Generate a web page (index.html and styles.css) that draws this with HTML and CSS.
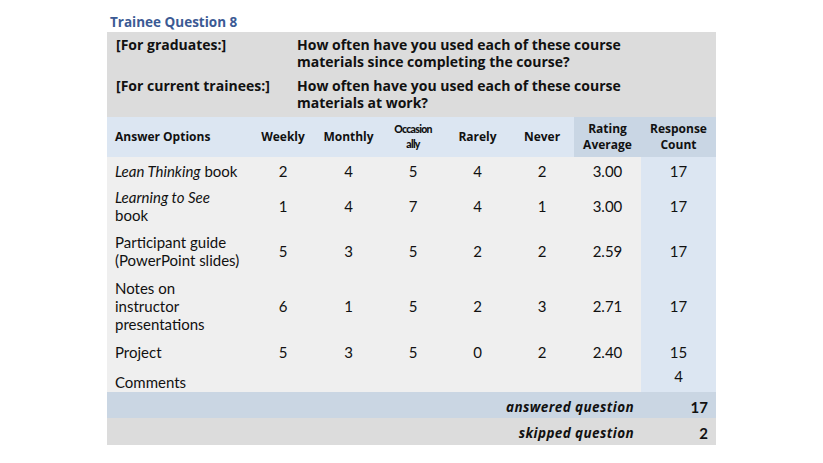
FILE: index.html
```html
<!DOCTYPE html>
<html>
<head>
<meta charset="utf-8">
<link rel="stylesheet" href="styles.css">
</head>
<body>
<div class="wrap">
  <div class="title">Trainee Question 8</div>
  <div class="question">
    <div class="qrow">
      <div class="qlabel">[For graduates:]</div>
      <div class="qtext">How often have you used each of these course materials since completing the course?</div>
    </div>
    <div class="qrow">
      <div class="qlabel">[For current trainees:]</div>
      <div class="qtext">How often have you used each of these course materials at work?</div>
    </div>
  </div>
  <table class="grid">
    <colgroup>
      <col class="c-opt"><col class="c-w"><col class="c-m"><col class="c-o"><col class="c-r"><col class="c-n"><col class="c-avg"><col class="c-cnt">
    </colgroup>
    <thead>
      <tr class="head">
        <th class="opt">Answer Options</th>
        <th>Weekly</th>
        <th>Monthly</th>
        <th class="occ">Occasion<br>ally</th>
        <th>Rarely</th>
        <th>Never</th>
        <th class="dark">Rating<br>Average</th>
        <th class="dark">Response<br>Count</th>
      </tr>
    </thead>
    <tbody>
      <tr class="r1">
        <td class="opt"><i>Lean Thinking</i> book</td>
        <td>2</td><td>4</td><td>5</td><td>4</td><td>2</td><td>3.00</td><td class="cnt">17</td>
      </tr>
      <tr class="r2">
        <td class="opt"><i>Learning to See</i><br>book</td>
        <td>1</td><td>4</td><td>7</td><td>4</td><td>1</td><td>3.00</td><td class="cnt">17</td>
      </tr>
      <tr class="r3">
        <td class="opt">Participant guide<br>(PowerPoint slides)</td>
        <td>5</td><td>3</td><td>5</td><td>2</td><td>2</td><td>2.59</td><td class="cnt">17</td>
      </tr>
      <tr class="r4">
        <td class="opt">Notes on<br>instructor<br>presentations</td>
        <td>6</td><td>1</td><td>5</td><td>2</td><td>3</td><td>2.71</td><td class="cnt">17</td>
      </tr>
      <tr class="r5">
        <td class="opt">Project</td>
        <td>5</td><td>3</td><td>5</td><td>0</td><td>2</td><td>2.40</td><td class="cnt">15</td>
      </tr>
      <tr class="r6">
        <td class="opt comments">Comments</td>
        <td></td><td></td><td></td><td></td><td></td><td></td><td class="cnt four">4</td>
      </tr>
      <tr class="sum answered">
        <td colspan="7" class="lbl">answered question</td>
        <td class="val">17</td>
      </tr>
      <tr class="sum skipped">
        <td colspan="7" class="lbl">skipped question</td>
        <td class="val">2</td>
      </tr>
    </tbody>
  </table>
</div>
</body>
</html>
```
FILE: styles.css
```css
html, body {
  margin: 0;
  padding: 0;
  background: #ffffff;
}
body {
  font-family: "Lato", "Open Sans", sans-serif;
  color: #111111;
}
.wrap {
  width: 609px;
  margin-left: 107px;
  padding-top: 13px;
}
.title {
  font-family: "Open Sans", sans-serif;
  font-size: 13.5px;
  font-weight: 700;
  color: #3b5a94;
  line-height: 19px;
  padding-left: 3px;
}
.question {
  background: #dcdcdc;
  padding: 4px 0 6px 0;
  display: flex;
  flex-direction: column;
  gap: 7px;
}
.qrow {
  display: flex;
  font-family: "Open Sans", sans-serif;
  font-size: 14px;
  font-weight: 700;
  line-height: 17px;
}
.qlabel {
  width: 181px;
  padding-left: 9px;
  flex: none;
}
.qtext {
  width: 350px;
}
.grid {
  width: 609px;
  border-collapse: collapse;
  table-layout: fixed;
  font-size: 15px;
}
.c-opt { width: 143px; }
.c-w { width: 66px; }
.c-m { width: 65px; }
.c-o { width: 64px; }
.c-r { width: 65px; }
.c-n { width: 64px; }
.c-avg { width: 67px; }
.c-cnt { width: 75px; }
.grid th, .grid td {
  padding: 0;
  text-align: center;
  vertical-align: middle;
}
.head {
  height: 40px;
  background: #dce6f2;
}
.head th {
  font-family: "Open Sans", sans-serif;
  font-size: 12px;
  font-weight: 700;
  line-height: 16px;
}
.head th.opt {
  text-align: left;
  padding-left: 8px;
}
.head th.occ {
  font-family: "Lato", sans-serif;
  font-size: 10.5px;
  letter-spacing: -0.7px;
  line-height: 15px;
  font-weight: 900;
}
.head th.dark {
  background: #c9d6e4;
}
.grid tbody td {
  background: #efefef;
  line-height: 18px;
}
.grid tbody td.opt {
  text-align: left;
  padding-left: 8px;
  padding-right: 2px;
}
.grid tbody td.cnt {
  background: #dce6f2;
}
.r1 { height: 27px; }
.r2 { height: 44px; }
.r3 { height: 46px; }
.r4 { height: 64px; }
.r5 { height: 28px; }
.r6 { height: 26px; }
.grid tbody td.comments {
  vertical-align: bottom;
  padding-bottom: 1px;
}
.grid tbody td.four {
  vertical-align: top;
  padding-top: 1px;
}
.sum td {
  font-family: "Open Sans", sans-serif;
  font-size: 13.5px;
  font-weight: 700;
  height: 23px;
  padding-top: 3px;
}
.sum td.lbl {
  text-align: right;
  font-style: italic;
  letter-spacing: 0.4px;
  padding-right: 7px;
}
.sum td.val {
  text-align: right;
  padding-right: 8px;
  font-family: "Lato", sans-serif;
  font-size: 15px;
}
.grid tbody tr.answered td {
  background: #cad6e3;
}
.grid tbody tr.skipped td {
  background: #dcdcdc;
  height: 24px;
}
```
